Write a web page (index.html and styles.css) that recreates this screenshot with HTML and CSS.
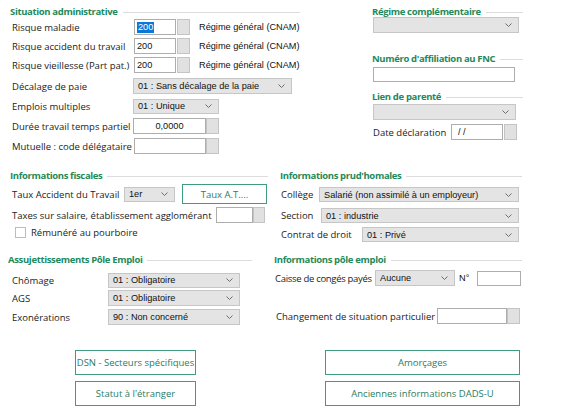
FILE: index.html
```html
<!DOCTYPE html>
<html lang="fr">
<head>
<meta charset="utf-8">
<link rel="stylesheet" href="styles.css">
</head>
<body>
<div class="page">
  <section class="band b1">
    <div class="col admin">
      <div class="hd">Situation administrative</div>
      <div class="row r1">
        <span class="lbl l-admin">Risque maladie</span>
        <span class="inp i-taux"><span class="sel">200</span></span><span class="spin sp-gap"></span>
        <span class="note">Régime général (CNAM)</span>
      </div>
      <div class="row r2">
        <span class="lbl l-admin">Risque accident du travail</span>
        <span class="inp i-taux">200</span><span class="spin sp-gap"></span>
        <span class="note">Régime général (CNAM)</span>
      </div>
      <div class="row r2">
        <span class="lbl l-admin">Risque vieillesse (Part pat.)</span>
        <span class="inp i-taux">200</span><span class="spin sp-gap"></span>
        <span class="note">Régime général (CNAM)</span>
      </div>
      <div class="row r4">
        <span class="lbl l-admin2">Décalage de paie</span>
        <span class="combo c-decal"><span>01 : Sans décalage de la paie</span><svg class="chev" viewBox="0 0 7 4"><path d="M0.5 0.5 L3.5 3.5 L6.5 0.5"/></svg></span>
      </div>
      <div class="row r5">
        <span class="lbl l-admin2">Emplois multiples</span>
        <span class="combo c-empl"><span>01 : Unique</span><svg class="chev" viewBox="0 0 7 4"><path d="M0.5 0.5 L3.5 3.5 L6.5 0.5"/></svg></span>
      </div>
      <div class="row r6">
        <span class="lbl l-admin2">Durée travail temps partiel</span>
        <span class="inp i-duree center">0,0000</span><span class="spin"></span>
      </div>
      <div class="row r6">
        <span class="lbl l-admin">Mutuelle : code délégataire</span>
        <span class="inp i-mut"></span><span class="spin"></span>
      </div>
    </div>
    <div class="col regime">
      <div class="hd hd-reg">Régime complémentaire</div>
      <span class="combo c-reg"><span></span><svg class="chev" viewBox="0 0 7 4"><path d="M0.5 0.5 L3.5 3.5 L6.5 0.5"/></svg></span>
      <div class="hd hd-fnc">Numéro d'affiliation au FNC</div>
      <span class="inp i-fnc"></span>
      <div class="hd hd-lien">Lien de parenté</div>
      <span class="combo c-lien"><span></span><svg class="chev" viewBox="0 0 7 4"><path d="M0.5 0.5 L3.5 3.5 L6.5 0.5"/></svg></span>
      <div class="row r-date">
        <span class="lbl l-date">Date déclaration</span>
        <span class="inp i-date">/ /</span><span class="spin sp-gap"></span>
      </div>
    </div>
  </section>

  <section class="band b2">
    <div class="col fisc">
      <div class="hd hd-b2">Informations fiscales</div>
      <div class="row r-at">
        <span class="lbl l-at">Taux Accident du Travail</span>
        <span class="combo c-at"><span>1er</span><svg class="chev" viewBox="0 0 7 4"><path d="M0.5 0.5 L3.5 3.5 L6.5 0.5"/></svg></span>
        <span class="btn b-at">Taux A.T....</span>
      </div>
      <div class="row r-tax">
        <span class="lbl l-tax">Taxes sur salaire, établissement agglomérant</span>
        <span class="inp i-tax"></span><span class="spin s-tax"></span>
      </div>
      <div class="row r-chk">
        <span class="chk"></span>
        <span class="lbl">Rémunéré au pourboire</span>
      </div>
    </div>
    <div class="col prud">
      <div class="hd hd-b2">Informations prud'homales</div>
      <div class="row r-col">
        <span class="lbl l-col">Collège</span>
        <span class="combo c-col"><span>Salarié (non assimilé à un employeur)</span><svg class="chev" viewBox="0 0 7 4"><path d="M0.5 0.5 L3.5 3.5 L6.5 0.5"/></svg></span>
      </div>
      <div class="row r-sec">
        <span class="lbl l-sec">Section</span>
        <span class="combo c-sec"><span>01 : industrie</span><svg class="chev" viewBox="0 0 7 4"><path d="M0.5 0.5 L3.5 3.5 L6.5 0.5"/></svg></span>
      </div>
      <div class="row r-con">
        <span class="lbl l-con">Contrat de droit</span>
        <span class="combo c-con"><span>01 : Privé</span><svg class="chev" viewBox="0 0 7 4"><path d="M0.5 0.5 L3.5 3.5 L6.5 0.5"/></svg></span>
      </div>
    </div>
  </section>

  <section class="band b3">
    <div class="col assuj">
      <div class="hd hd-b3">Assujettissements Pôle Emploi</div>
      <div class="row r-cho">
        <span class="lbl l-pe">Chômage</span>
        <span class="combo c-pe"><span>01 : Obligatoire</span><svg class="chev" viewBox="0 0 7 4"><path d="M0.5 0.5 L3.5 3.5 L6.5 0.5"/></svg></span>
      </div>
      <div class="row r-ags">
        <span class="lbl l-pe">AGS</span>
        <span class="combo c-pe"><span>01 : Obligatoire</span><svg class="chev" viewBox="0 0 7 4"><path d="M0.5 0.5 L3.5 3.5 L6.5 0.5"/></svg></span>
      </div>
      <div class="row r-exo">
        <span class="lbl l-pe">Exonérations</span>
        <span class="combo c-pe"><span>90 : Non concerné</span><svg class="chev" viewBox="0 0 7 4"><path d="M0.5 0.5 L3.5 3.5 L6.5 0.5"/></svg></span>
      </div>
    </div>
    <div class="col poles">
      <div class="hd hd-b3">Informations pôle emploi</div>
      <div class="row r-cai">
        <span class="lbl l-cai">Caisse de congés payés</span>
        <span class="combo c-cai"><span>Aucune</span><svg class="chev" viewBox="0 0 7 4"><path d="M0.5 0.5 L3.5 3.5 L6.5 0.5"/></svg></span>
        <span class="num">N°</span>
        <span class="inp i-num"></span>
      </div>
      <div class="row r-chg">
        <span class="lbl l-chg">Changement de situation particulier</span>
        <span class="inp i-chg"></span><span class="spin"></span>
      </div>
    </div>
  </section>

  <section class="btns">
    <span class="btn">DSN - Secteurs spécifiques</span>
    <span class="btn">Amorçages</span>
    <span class="btn">Statut à l'étranger</span>
    <span class="btn">Anciennes informations DADS-U</span>
  </section>
</div>
</body>
</html>
```

FILE: styles.css
```css
* { box-sizing: border-box; }
html, body { margin: 0; padding: 0; background: #ffffff; }
body { font-family: "Open Sans", "Liberation Sans", sans-serif; font-size: 9.5px; color: #222; }
.page { width: 576px; height: 411px; overflow: hidden; }

.band { display: flex; }
.b1 { height: 160px; }
.b2 { height: 90px; }
.b3 { height: 90px; }
.col { display: flex; flex-direction: column; align-items: flex-start; }

.hd {
  display: flex; align-items: center; width: 100%;
  height: 10px; line-height: 10px; margin-top: 7px;
  font-weight: 700; font-size: 9.5px; letter-spacing: -0.35px;
  color: #1e8a5b; white-space: nowrap;
}
.hd::after { content: ""; flex: 1; border-top: 1px solid #dcdcdc; margin-left: 5px; }

.row { display: flex; align-items: center; height: 16px; }
.lbl { flex: none; white-space: nowrap; color: #222; }

.inp {
  flex: none; display: flex; align-items: center; height: 16px;
  background: #fff; border: 1px solid #adadad; padding-left: 2px;
  font-family: "Liberation Sans", Arial, sans-serif; font-size: 9.2px; color: #111;
}
.inp.center { justify-content: center; padding-left: 0; }
.sel { background: #0a78d7; color: #fff; padding: 0 1px; line-height: 11px; }
.spin { flex: none; width: 13px; height: 16px; background: #e1e1e1; border: 1px solid #c4c4c4; }
.sp-gap { margin-left: 1px; }
.note { margin-left: 9px; font-family: "Liberation Sans", Arial, sans-serif; font-size: 9.2px; color: #111; white-space: nowrap; }

.combo {
  flex: none; display: flex; align-items: center; justify-content: space-between;
  height: 16px; background: #e4e4e4; border: 1px solid #c6c6c6;
  padding: 0 6px 0 4px;
  font-family: "Liberation Sans", Arial, sans-serif; font-size: 9.2px; color: #111; white-space: nowrap;
}
.chev { width: 7px; height: 4px; flex: none; }
.chev path { fill: none; stroke: #6e6e6e; stroke-width: 1; }

.btn {
  display: flex; align-items: center; justify-content: center;
  background: #fff; border: 1px solid #409c80; color: #2c7c63;
  font-size: 9.5px; white-space: nowrap;
}

/* band 1 left */
.admin { width: 290px; margin-left: 10px; }
.admin .row { padding-left: 2px; }
.r1 { margin-top: 2px; }
.r2 { margin-top: 3px; }
.r4 { margin-top: 5px; }
.r5 { margin-top: 4px; }
.r5 .combo { height: 15px; }
.r6 { margin-top: 4px; }
.l-admin { width: 122px; }
.l-admin2 { width: 121px; }
.i-taux { width: 42px; }
.c-decal { width: 159px; }
.c-empl { width: 86px; }
.i-duree { width: 73px; }
.i-mut { width: 72px; }

/* band 1 right */
.regime { width: 151px; margin-left: 72px; }
.hd-reg { margin-top: 7px; }
.c-reg { width: 146px; margin-left: 1px; margin-top: 0; }
.hd-fnc { margin-top: 21px; }
.i-fnc { width: 142px; height: 15px; margin-left: 1px; margin-top: 3px; }
.hd-lien { margin-top: 10px; }
.c-lien { width: 143px; margin-left: 1px; margin-top: 2px; }
.r-date { margin-top: 4px; padding-left: 1px; }
.l-date { width: 78px; }
.i-date { width: 52px; padding-left: 6px; }

/* band 2 */
.fisc { width: 258px; margin-left: 10px; }
.hd-b2 { margin-top: 11px; }
.r-at { height: 20px; margin-top: 3px; padding-left: 2px; }
.l-at { width: 112px; }
.c-at { width: 51px; height: 15px; }
.b-at { width: 85px; height: 20px; margin-left: 7px; }
.r-tax { margin-top: 3px; padding-left: 2px; }
.l-tax { width: 204px; }
.i-tax { width: 37px; }
.s-tax { width: 12px; }
.r-chk { height: 11px; margin-top: 4px; }
.chk { width: 11px; height: 11px; margin-left: 5px; margin-right: 5px; border: 1px solid #bdbdbd; background: #fff; flex: none; }

.prud { width: 242px; margin-left: 12px; }
.prud .row { height: 15px; padding-left: 1px; }
.prud .combo { height: 15px; }
.r-col { margin-top: 6px; }
.r-sec { margin-top: 6px; }
.r-con { margin-top: 4px; }
.l-col { width: 38px; }
.c-col { width: 200px; }
.l-sec { width: 40px; }
.c-sec { width: 198px; }
.l-con { width: 81px; }
.c-con { width: 157px; }

/* band 3 */
.assuj { width: 244px; margin-left: 8px; }
.hd-b3 { margin-top: 5px; }
.assuj .row { padding-left: 4px; }
.r-cho { margin-top: 7px; }
.r-cho .combo { height: 15px; }
.r-ags { margin-top: 2px; }
.r-exo { margin-top: 3px; }
.l-pe { width: 96px; }
.c-pe { width: 132px; }

.poles { width: 248px; margin-left: 22px; }
.r-cai { margin-top: 5px; padding-left: 1px; }
.l-cai { width: 100px; letter-spacing: -0.3px; }
.c-cai { width: 80px; }
.num { width: 18px; margin-left: 4px; font-family: "Liberation Sans", Arial, sans-serif; font-size: 9.2px; color: #111; }
.i-num { width: 44px; height: 15px; }
.r-chg { margin-top: 22px; padding-left: 2px; }
.l-chg { width: 161px; }
.i-chg { width: 70px; }

/* buttons */
.btns {
  display: grid; grid-template-columns: 121px 195px; grid-auto-rows: 25px;
  column-gap: 129px; row-gap: 6px; padding-left: 75px; margin-top: 10px;
}
```
